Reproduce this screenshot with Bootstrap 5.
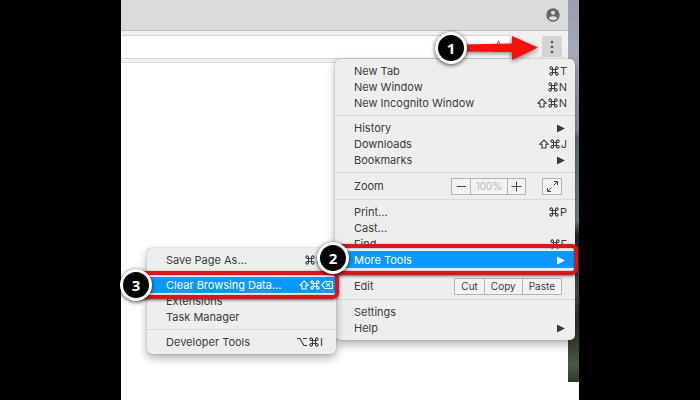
<!DOCTYPE html>
<html lang="en">
<head>
<meta charset="utf-8">
<meta name="viewport" content="width=device-width, initial-scale=1">
<title>Clear Browsing Data</title>
<link rel="stylesheet" href="https://cdn.jsdelivr.net/npm/bootstrap@5.3.0/dist/css/bootstrap.min.css">
<style>
body { background: #000; font-family: Inter, "Liberation Sans", "DejaVu Sans", sans-serif; font-size: 11px; line-height: 16px; color: #3c3c3c; }
.stage { width: 100%; padding: 0 121px; }
.desk { background: #fff; min-height: 100vh; }
.wallpaper { position: absolute; z-index: 0; top: 0; right: 0; width: 11px; height: 382px; background: linear-gradient(#9a9eae 0, #a6abba 60px, #8b91a1 130px, #5c6f76 138px, #71858b 220px, #1f2527 235px, #4b4f4a 290px, #2b332a 320px, #39492f 350px, #4b5a42 365px, #2c3826 382px); }
.browser { margin-right: 11px; background: #fff; min-height: 100vh; position: relative; }
.tabstrip { height: 31px; background: #d9dbdc; border-bottom: 1px solid #bfc1c2; padding-right: 8px; }
.toolbar { height: 32px; background: #f1f1f1; border-bottom: 1px solid #d9d9d9; padding: 4px 6px 4px 0; }
.address-box { height: 24px; border: 1px solid #d6d6d6; border-left: 0; border-radius: 0 3px 3px 0; background: #fff; padding: 0 5px 0 8px; margin-right: 31px; }
.address-box input { border: 0; min-width: 0; background: transparent; outline: 0; padding: 0; }
.icon-btn { border: 0; padding: 0; background: transparent; line-height: 0; }
.kebab { width: 20px; height: 21px; background: #d5d5d5; border-radius: 1px; }
.menu-box { position: absolute; background: #eeeeee; border-radius: 5px; padding: 4px 0; box-shadow: 0 0 1px rgba(0,0,0,.5), 0 4px 10px rgba(0,0,0,.32); }
.main-menu { z-index: 2; top: 59px; right: 4px; width: 240px; }
.sub-menu { z-index: 3; top: 248px; left: 26px; width: 189px; }
.entry { display: flex; justify-content: space-between; align-items: center; width: 100%; height: 16px; padding: 0 8px 0 19px; border: 0; background: transparent; color: inherit; text-align: left; white-space: nowrap; }
.sub-menu .entry { padding-right: 13px; }
.sub-menu .entry.chosen { padding-right: 3px; }
.entry.chosen { background: #0a99fb; color: #fff; }
.main-menu .entry.chosen { box-shadow: 0 -1px 0 #0a99fb; }
.rule { height: 1px; margin: 4px 0; background: #dadada; border: 0; opacity: 1; }
.control-row { height: 18px; padding: 0 13px 0 19px; }
.keys { display: inline-flex; align-items: center; gap: 1px; }
.keys svg { width: 10px; height: 10px; fill: none; stroke: currentColor; stroke-width: 1.1; }
.keys svg.wide { width: 12px; }
.arrow-end { width: 8px; height: 9px; fill: currentColor; margin-right: 2px; }
.seg { display: flex; border: 1px solid #b5b5b5; height: 17px; background: #f3f3f3; }
.seg > * { border: 0; border-left: 1px solid #b5b5b5; background: transparent; padding: 0 7px; font-size: 10px; line-height: 15px; color: #3c3c3c; display: flex; align-items: center; justify-content: center; }
.seg.edit > button { padding: 0 6px; }
.seg > :first-child { border-left: 0; }
.seg svg { width: 13px; height: 13px; stroke: #444; fill: none; }
.seg .step { width: 18px; padding: 0; }
.seg .level { width: 37px; padding: 0; color: #bbb; }
.frame { position: absolute; border: 4px solid #d8161b; border-radius: 6px; box-shadow: 0 1px 3px rgba(0,0,0,.6), inset 0 0 2px rgba(0,0,0,.4); }
.frame-tools { z-index: 4; top: 244px; right: 1px; width: 245px; height: 31px; }
.frame-clear { z-index: 5; top: 271px; left: 10px; width: 208px; height: 28px; }
.marker { position: absolute; z-index: 6; width: 32px; height: 32px; border-radius: 50%; border: 3px solid #fff; background: #000; color: #fff; font: bold 15px/26px "Open Sans", sans-serif; text-align: center; box-shadow: 0 1px 4px rgba(0,0,0,.75); }
.marker-one { top: 32px; right: 112px; }
.marker-two { top: 242px; left: 196px; }
.marker-three { top: 269px; left: -1px; }
.pointer { position: absolute; z-index: 5; top: 34px; right: 41px; width: 76px; height: 30px; filter: drop-shadow(0 2px 2px rgba(0,0,0,.45)); }
</style>
</head>
<body>
<svg class="d-none" aria-hidden="true">
  <symbol id="cmd" viewBox="0 0 10 10"><path d="M3.5 3.5h3v3h-3zM3.5 3.5H2.3A1.3 1.3 0 1 1 3.5 2.2zM6.5 3.5V2.2a1.3 1.3 0 1 1 1.2 1.3zM6.5 6.5h1.2a1.3 1.3 0 1 1-1.2 1.3zM3.5 6.5v1.3a1.3 1.3 0 1 1-1.2-1.3z"/></symbol>
  <symbol id="shift" viewBox="0 0 10 10"><path d="M5 1L9.2 5.2H7V9H3V5.2H.8z"/></symbol>
  <symbol id="opt" viewBox="0 0 12 10"><path d="M1 1.5h3l4 7h3M7 1.5h4"/></symbol>
  <symbol id="del" viewBox="0 0 12 10"><path d="M4 1.5h7.3v7H4L.8 5zM5.2 3.2l3.8 3.6M9 3.2L5.2 6.8"/></symbol>
  <symbol id="tri" viewBox="0 0 8 9"><path d="M0 .5L8 4.5 0 8.5z"/></symbol>
</svg>
<div class="stage">
  <main class="desk position-relative">
    <div class="wallpaper"></div>
    <div class="browser">
      <div class="tabstrip d-flex justify-content-end align-items-center">
        <button class="icon-btn" aria-label="Profile"><svg width="14" height="14" viewBox="0 0 14 14"><circle cx="7" cy="7" r="6.7" fill="#666"/><circle cx="7" cy="4.8" r="2.1" fill="#d9dbdc"/><path d="M2.8 10.2C3.5 7.6 10.5 7.6 11.2 10.2 9.5 12.8 4.5 12.8 2.8 10.2z" fill="#d9dbdc"/></svg></button>
      </div>
      <div class="toolbar d-flex align-items-center">
        <div class="address-box d-flex align-items-center flex-grow-1">
          <input class="flex-grow-1" type="text" aria-label="Address">
          <button class="icon-btn" aria-label="Bookmark this page"><svg width="13" height="13" viewBox="0 0 13 13"><path d="M6.500.8L8.200 4.700 12.300 5 9.200 7.800 10.200 11.900 6.500 9.700 2.800 11.900 3.800 7.800.7 5 4.800 4.700z" fill="none" stroke="#666"/></svg></button>
        </div>
        <button class="icon-btn kebab" aria-label="Menu"><svg width="4" height="14" viewBox="0 0 4 14" fill="#555"><circle cx="2" cy="2" r="1.3"/><circle cx="2" cy="7" r="1.3"/><circle cx="2" cy="12" r="1.3"/></svg></button>
      </div>
    </div>

    <nav class="menu-box main-menu" aria-label="Browser menu">
      <button class="entry">New Tab<span class="keys"><svg><use href="#cmd"/></svg>T</span></button>
      <button class="entry">New Window<span class="keys"><svg><use href="#cmd"/></svg>N</span></button>
      <button class="entry">New Incognito Window<span class="keys"><svg><use href="#shift"/></svg><svg><use href="#cmd"/></svg>N</span></button>
      <hr class="rule">
      <button class="entry">History<svg class="arrow-end"><use href="#tri"/></svg></button>
      <button class="entry">Downloads<span class="keys"><svg><use href="#shift"/></svg><svg><use href="#cmd"/></svg>J</span></button>
      <button class="entry">Bookmarks<svg class="arrow-end"><use href="#tri"/></svg></button>
      <hr class="rule">
      <div class="control-row d-flex align-items-center">
        <span class="me-auto">Zoom</span>
        <div class="seg me-3">
          <button class="step" aria-label="Zoom out"><svg viewBox="0 0 13 13"><path d="M2 6.5h9"/></svg></button>
          <span class="level">100%</span>
          <button class="step" aria-label="Zoom in"><svg viewBox="0 0 13 13"><path d="M1.500 6.5h10M6.5 1.500v10"/></svg></button>
        </div>
        <div class="seg"><button class="step" aria-label="Full screen"><svg viewBox="0 0 13 13"><path d="M7.5 5.5L11 2M5.5 7.5L2 11M8 1.5h3.5V5M1.5 8v3.5H5"/></svg></button></div>
      </div>
      <hr class="rule">
      <button class="entry">Print...<span class="keys"><svg><use href="#cmd"/></svg>P</span></button>
      <button class="entry">Cast...</button>
      <button class="entry">Find...<span class="keys"><svg><use href="#cmd"/></svg>F</span></button>
      <button class="entry chosen">More Tools<svg class="arrow-end"><use href="#tri"/></svg></button>
      <hr class="rule">
      <div class="control-row d-flex align-items-center">
        <span class="me-auto">Edit</span>
        <div class="seg edit"><button>Cut</button><button>Copy</button><button>Paste</button></div>
      </div>
      <hr class="rule">
      <button class="entry">Settings</button>
      <button class="entry">Help<svg class="arrow-end"><use href="#tri"/></svg></button>
    </nav>

    <nav class="menu-box sub-menu" aria-label="More Tools">
      <button class="entry">Save Page As...<span class="keys"><svg><use href="#cmd"/></svg>S</span></button>
      <hr class="rule">
      <button class="entry chosen">Clear Browsing Data...<span class="keys"><svg><use href="#shift"/></svg><svg><use href="#cmd"/></svg><svg class="wide"><use href="#del"/></svg></span></button>
      <button class="entry">Extensions</button>
      <button class="entry">Task Manager</button>
      <hr class="rule">
      <button class="entry">Developer Tools<span class="keys"><svg class="wide"><use href="#opt"/></svg><svg><use href="#cmd"/></svg>I</span></button>
    </nav>

    <div class="frame frame-tools"></div>
    <div class="frame frame-clear"></div>
    <svg class="pointer" viewBox="0 0 76 30" aria-hidden="true"><path d="M0 10.5L50 9.5V2L76 13.5 50 26V18L0 17.5z" fill="#fb0f0c"/></svg>
    <div class="marker marker-one">1</div>
    <div class="marker marker-two">2</div>
    <div class="marker marker-three">3</div>
  </main>
</div>
<script src="https://cdn.jsdelivr.net/npm/bootstrap@5.3.0/dist/js/bootstrap.bundle.min.js"></script>
</body>
</html>
